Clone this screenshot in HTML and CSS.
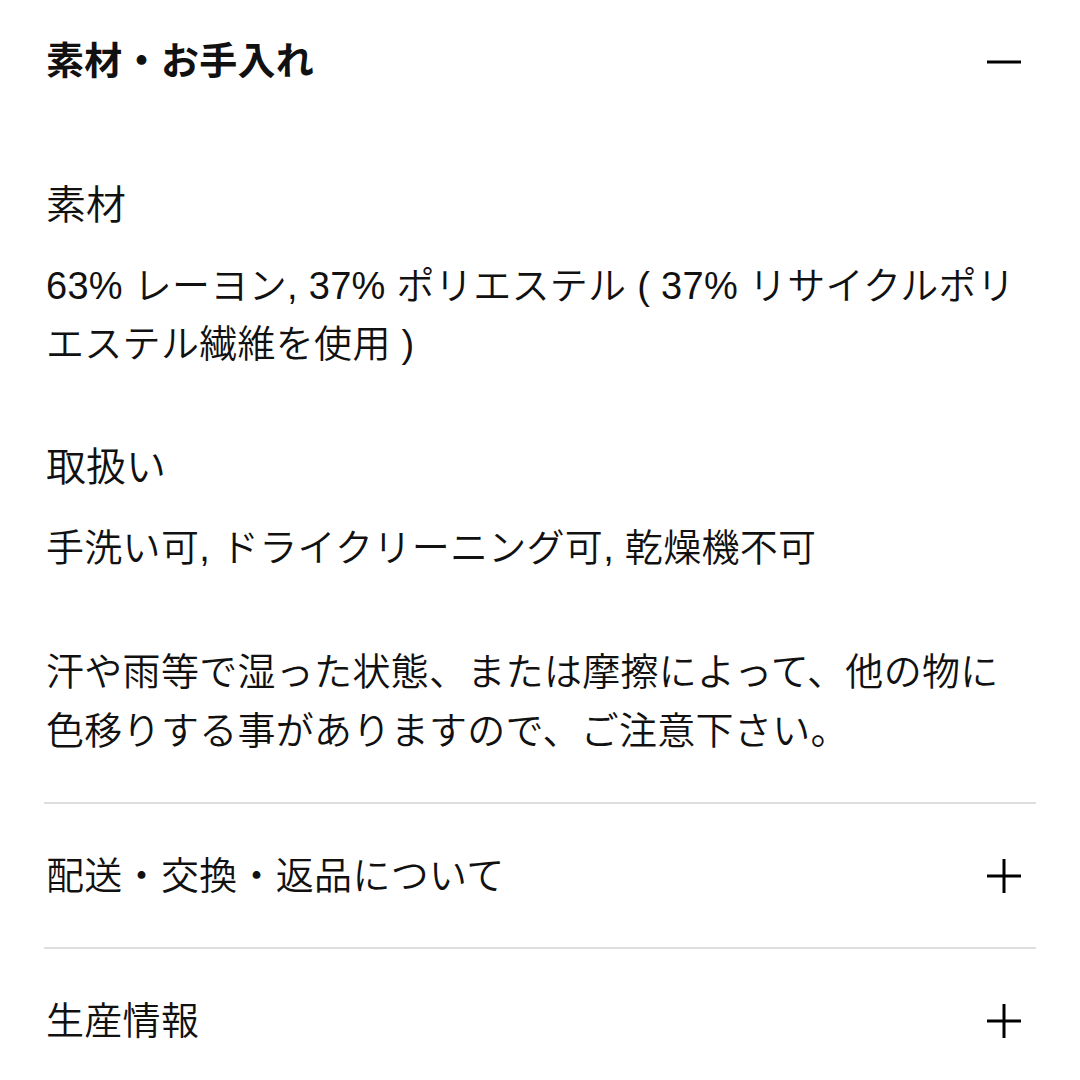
FILE: index.html
```html
<!DOCTYPE html>
<html lang="ja">
<head>
<meta charset="utf-8">
<link rel="stylesheet" href="styles.css">
</head>
<body>
<div class="accordion">
  <section class="panel open">
    <div class="panel-head">
      <h2 class="panel-title bold">素材・お手入れ</h2>
      <svg class="icon" viewBox="0 0 34 34"><rect x="0" y="15.5" width="34" height="3" fill="#000"/></svg>
    </div>
    <div class="panel-body">
      <h3 class="sub">素材</h3>
      <p class="text">63% レーヨン, 37% ポリエステル ( 37% リサイクルポリ<br>エステル繊維を使用 )</p>
      <h3 class="sub sub-gap">取扱い</h3>
      <p class="text">手洗い可, ドライクリーニング可, 乾燥機不可</p>
      <p class="text note">汗や雨等で湿った状態、または摩擦によって、他の物に<br>色移りする事がありますので、ご注意下さい。</p>
    </div>
  </section>
  <section class="panel">
    <div class="panel-head row">
      <h2 class="panel-title">配送・交換・返品について</h2>
      <svg class="icon" viewBox="0 0 34 34"><rect x="0" y="15.5" width="34" height="3" fill="#000"/><rect x="15.5" y="0" width="3" height="34" fill="#000"/></svg>
    </div>
  </section>
  <section class="panel">
    <div class="panel-head row">
      <h2 class="panel-title">生産情報</h2>
      <svg class="icon" viewBox="0 0 34 34"><rect x="0" y="15.5" width="34" height="3" fill="#000"/><rect x="15.5" y="0" width="3" height="34" fill="#000"/></svg>
    </div>
  </section>
</div>
</body>
</html>
```
FILE: styles.css
```css
html, body {
  margin: 0;
  padding: 0;
  background: #fff;
}
body {
  font-family: "Liberation Sans", "Noto Sans CJK JP", sans-serif;
  color: #111;
}
.accordion {
  margin: 0 44px;
  width: 992px;
}
.panel + .panel {
  border-top: 2px solid #dedede;
}
.panel.open {
  padding-bottom: 41px;
}
.panel-head {
  display: flex;
  align-items: center;
  justify-content: space-between;
  height: 124px;
  padding-left: 2px;
  padding-right: 15px;
}
.panel-head.row {
  height: 143px;
}
.panel-title {
  margin: 0 0 2px;
  font-size: 38px;
  font-weight: 350;
  letter-spacing: 0.3px;
  line-height: 1;
  white-space: nowrap;
}
.panel-head.row .panel-title {
  margin-bottom: 0;
}
.panel-title.bold {
  font-weight: 700;
}
.icon {
  width: 34px;
  height: 34px;
  display: block;
}
.panel-body {
  padding: 52px 0 0 2px;
}
.sub {
  margin: 0;
  font-size: 40px;
  font-weight: 350;
  line-height: 58px;
}
.sub-gap {
  margin-top: 65px;
}
.text {
  margin: 23px 0 0;
  font-size: 38px;
  font-weight: 350;
  letter-spacing: 0.3px;
  line-height: 58px;
  white-space: nowrap;
}
.note {
  margin-top: 66px;
  line-height: 59px;
}
```
